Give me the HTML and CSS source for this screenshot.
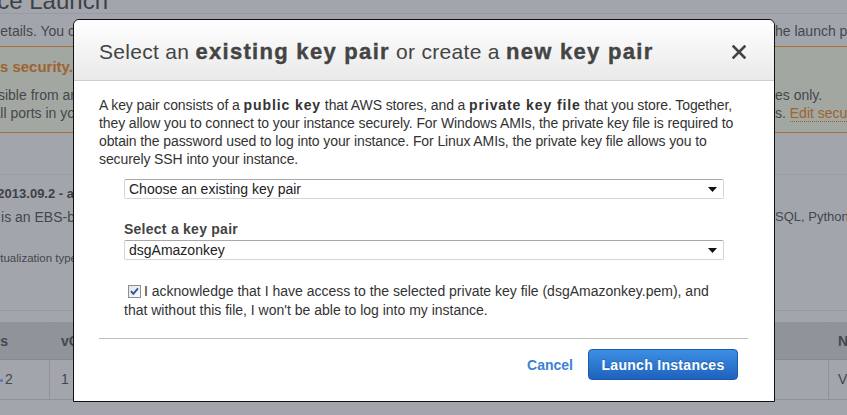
FILE: index.html
```html
<!DOCTYPE html>
<html>
<head>
<meta charset="utf-8">
<link rel="stylesheet" href="styles.css">
</head>
<body>
<div class="bg">
  <div class="bg-title"><div class="l wide"><span>Review Instance Launch</span></div></div>
  <div class="bg-row intro">
    <div class="l"><span>Please review your instance launch details. You c</span></div>
    <div class="r">he launch process.</div>
  </div>
  <div class="warn">
    <div class="bg-row w1"><div class="l"><span class="wt">Improve your instances security.</span></div><div class="r"></div></div>
    <div class="bg-row w2"><div class="l"><span>Your instances may be accessible from ar</span></div><div class="r">es only.</div></div>
    <div class="bg-row w3"><div class="l"><span>We recommend that you open all ports in yo</span></div><div class="r">s. <span class="link">Edit security groups</span></div></div>
  </div>
  <div class="ami">
    <div class="bg-row a1"><div class="l"><span class="b">Amazon Linux AMI 2013.09.2 - a</span></div><div class="r"></div></div>
    <div class="bg-row a2"><div class="l"><span>The Amazon Linux AMI is an EBS-b</span></div><div class="r sm">SQL, Python</div></div>
    <div class="bg-row a3"><div class="l"><span>Root Device Type: ebs &nbsp; Virtualization type</span></div><div class="r"></div></div>
  </div>
  <div class="tbl">
    <div class="th c1">ECUs</div><div class="th c2">vCPUs</div><div class="th c3">Network</div>
    <div class="td c1"><span class="dot"></span>2</div><div class="td c2">1</div><div class="td c3">Very Low</div>
  </div>
</div>

<div class="modal">
  <div class="m-head">
    <h2 class="m-title">Select an <b>existing key pair</b> or create a <b>new key pair</b></h2>
    <svg class="close" width="14" height="14" viewBox="0 0 14 14"><path d="M1.5 1.5 L12.5 12.5 M12.5 1.5 L1.5 12.5" stroke="#444" stroke-width="2.6" stroke-linecap="square" fill="none"/></svg>
  </div>
  <div class="m-body">
    <p class="desc">A key pair consists of a <b>public key</b> that AWS stores, and a <b>private key file</b> that you store. Together, they allow you to connect to your instance securely. For Windows AMIs, the private key file is required to obtain the password used to log into your instance. For Linux AMIs, the private key file allows you to securely SSH into your instance.</p>
    <div class="form">
      <div class="sel s1"><span>Choose an existing key pair</span><svg width="9" height="5" viewBox="0 0 9 5"><path d="M0 0 H9 L4.5 5 Z" fill="#111"/></svg></div>
      <div class="lbl">Select a key pair</div>
      <div class="sel s2"><span>dsgAmazonkey</span><svg width="9" height="5" viewBox="0 0 9 5"><path d="M0 0 H9 L4.5 5 Z" fill="#111"/></svg></div>
      <p class="ack"><svg class="cb" width="13" height="13" viewBox="0 0 13 13"><defs><linearGradient id="g" x1="0" y1="0" x2="1" y2="1"><stop offset="0" stop-color="#dfe3ea"/><stop offset="1" stop-color="#fbfbfb"/></linearGradient></defs><rect x="0.5" y="0.5" width="12" height="12" fill="url(#g)" stroke="#8e8f8f"/><path d="M3 6.2 L5.3 8.8 L10 3.3" stroke="#2c4fa0" stroke-width="1.8" fill="none"/></svg>I acknowledge that I have access to the selected private key file (dsgAmazonkey.pem), and that without this file, I won't be able to log into my instance.</p>
    </div>
    <div class="m-foot">
      <span class="cancel">Cancel</span>
      <span class="btn">Launch Instances</span>
    </div>
  </div>
</div>
</body>
</html>
```

FILE: styles.css
```css
html, body { margin: 0; padding: 0; }
body {
  width: 847px;
  height: 415px;
  overflow: hidden;
  position: relative;
  background: #a2a6ac;
  font-family: "Liberation Sans", Arial, sans-serif;
  color: #44474c;
}
.bg { width: 847px; }
.bg-row { display: flex; justify-content: space-between; font-size: 14px; }
.l {
  width: 75px;
  overflow: hidden;
  white-space: nowrap;
  display: flex;
  justify-content: flex-end;
}
.l.wide { width: 108px; }
.r { width: 72px; overflow: hidden; white-space: nowrap; }
.r.sm { font-size: 13px; overflow: visible; }

.bg-title {
  display: flex;
  height: 13px;
  border-bottom: 1px solid #979ba1;
  font-size: 24px;
  line-height: 24px;
}
.bg-title .l { margin-top: -11px; height: 24px; color: #3e4146; }

.intro { height: 32px; line-height: 34px; }

.warn {
  border-top: 1px solid #a8712f;
  border-bottom: 1px solid #a8712f;
  background: #a3a7a2;
  height: 85px;
}
.w1 { height: 39px; line-height: 40px; font-size: 15px; }
.w1 .l { width: 73px; }
.wt { font-weight: bold; color: #9b6430; }
.w2 { height: 18px; line-height: 18px; }
.w3 { height: 18px; line-height: 18px; }
.link { color: #9b6430; border-bottom: 1px dotted #9b6430; }

.ami {
  margin-top: 41px;
  border-top: 1px solid #9a9ea4;
  border-bottom: 1px solid #979ba1;
  height: 135px;
}
.a1 { height: 31px; line-height: 38px; font-size: 13px; }
.a1 .l { width: 74px; }
.b { font-weight: bold; color: #3e4146; }
.a2 { height: 22px; line-height: 22px; }
.a3 { height: 60px; line-height: 60px; font-size: 11.5px; }
.a3 .l { width: 77px; }

.tbl {
  display: grid;
  grid-template-columns: 49px 1fr 19px;
  grid-template-rows: 38px 39px;
  margin-top: 11px;
  border-bottom: 1px solid #8e9298;
  font-size: 14px;
}
.th {
  background: #8f939a;
  font-weight: bold;
  line-height: 38px;
  border-bottom: 1px solid #868a90;
  white-space: nowrap;
  overflow: hidden;
  display: flex;
}
.td { line-height: 39px; white-space: nowrap; overflow: hidden; display: flex; }
.c2 { border-left: 1px solid #8e9298; padding-left: 11px; }
.c3 { border-left: 1px solid #8e9298; padding-left: 9px; }
.th.c1 { justify-content: flex-end; padding-right: 41px; }
.td.c1 { justify-content: flex-start; }
.dot { display: inline-block; width: 3px; height: 3px; border-radius: 2px; background: #4a79b0; margin: 19px 2px 0 0; }

.modal {
  position: absolute;
  left: 73px;
  top: 19px;
  width: 700px;
  height: 381px;
  background: #fff;
  border: 1px solid #111;
  border-radius: 6px 6px 0 0;
}
.m-head {
  height: 60px;
  border-bottom: 1px solid #cfcfcf;
  border-radius: 6px 6px 0 0;
  background: linear-gradient(#ffffff, #e9e9e9);
  display: flex;
  align-items: center;
  justify-content: space-between;
  padding: 0 28px 0 25px;
}
.m-title {
  margin: 0;
  font-size: 21px;
  font-weight: normal;
  color: #444;
  letter-spacing: 0.3px;
  padding-top: 4px;
  white-space: nowrap;
}
.m-title b {
  font-weight: bold;
  font-size: 22px;
  letter-spacing: 1.3px;
  -webkit-text-stroke: 0.4px #444;
}
.close { margin-top: 4px; }

.m-body { padding: 15px 26px 21px 25px; }
.desc {
  margin: 0;
  font-size: 14px;
  line-height: 18px;
  color: #333;
  letter-spacing: -0.1px;
}
.desc b { letter-spacing: 0.9px; }
.form { margin-left: 25px; width: 600px; }
.sel {
  box-sizing: border-box;
  height: 20px;
  border: 1px solid #d6d6d6;
  border-top-color: #a9a9a9;
  border-radius: 2px;
  display: flex;
  align-items: center;
  justify-content: space-between;
  padding: 0 6px 0 4px;
  font-size: 14px;
  color: #222;
}
.s1 { margin-top: 11px; }
.lbl {
  margin-top: 21px;
  font-size: 14px;
  line-height: 18px;
  font-weight: bold;
  color: #444;
  letter-spacing: 0.25px;
}
.s2 { margin-top: 2px; }
.ack {
  margin: 22px 0 0 0;
  font-size: 14px;
  line-height: 19px;
  color: #333;
}
.cb { vertical-align: -2px; margin: 0 3px 0 4px; }

.m-foot {
  margin-top: 18px;
  border-top: 1px solid #bdbdbd;
  padding: 10px 10px 0 0;
  display: flex;
  justify-content: flex-end;
  align-items: center;
  gap: 15px;
}
.cancel { font-size: 14px; font-weight: bold; color: #3b82d6; }
.btn {
  box-sizing: border-box;
  width: 150px;
  height: 31px;
  border: 1px solid #1b5bae;
  border-radius: 4px;
  background: linear-gradient(#3d8fe4, #1e62be);
  color: #fff;
  font-size: 14px;
  font-weight: bold;
  letter-spacing: 0.3px;
  display: flex;
  align-items: center;
  justify-content: center;
  text-shadow: 0 -1px 0 rgba(0,0,0,0.2);
}
```
